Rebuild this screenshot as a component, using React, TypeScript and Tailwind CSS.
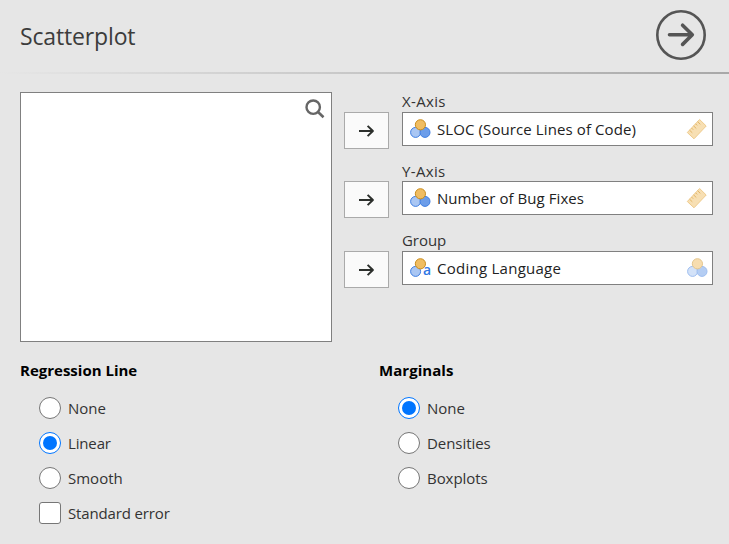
import type { ReactNode } from "react";

function Arrow() {
  return (
    <svg width="16" height="14" viewBox="0 0 16 14" fill="none" stroke="#2c2f2c" strokeWidth="2">
      <path d="M0 7H14" />
      <path d="M8.6 1.9L13.9 7L8.6 12.1" strokeLinejoin="round" />
    </svg>
  );
}

function Nominal({ text = false, faded = false }: { text?: boolean; faded?: boolean }) {
  return (
    <span className={`flex h-5 w-[21px] ${faded ? "opacity-50" : ""}`}>
      <svg width="21" height="20" viewBox="0 0 21 20" className="shrink-0">
        <circle cx="5.6" cy="13.4" r="5" fill="#a9c6f3" stroke="#3e7ee2" />
        {!text && <circle cx="15" cy="13.4" r="5" fill="#6c9de9" stroke="#3e7ee2" />}
        <circle cx="10.4" cy="5.8" r="5.1" fill="#f0bd62" stroke="#c98d1d" />
      </svg>
      {text && (
        <span className="-ml-[8px] pt-[3px] text-[14px] leading-[18px] font-semibold text-[#2f78e4]">a</span>
      )}
    </span>
  );
}

function Ruler() {
  return (
    <svg width="22" height="22" viewBox="0 0 22 22">
      <path d="M1.3 14.5L13.6 1.5L20.2 8L8 20.8Z" fill="#f7dfb3" stroke="#efcb8c" />
      <path d="M3.6 12.2L6.3 14.8M5.6 10.1L7.2 11.7M7.6 7.9L10.3 10.5M9.6 5.8L11.2 7.4M11.6 3.7L14.3 6.3" stroke="#e2b566" fill="none" />
    </svg>
  );
}

function Target({ label, value, tracking, icon, allowed, height, lineHeight = "leading-[19px]" }: {
  label: string; value: string; tracking: string; icon: ReactNode; allowed: ReactNode; height: string; lineHeight?: string;
}) {
  return (
    <div className={`flex gap-[13px] ${height}`}>
      <button className="mt-5 flex h-[37px] w-[45px] items-center justify-center border border-[#aaa] bg-[#fafafa]">
        <Arrow />
      </button>
      <div className="w-[311px]">
        <div className={`h-5 text-[15px] text-[#333] ${label === "Group" ? "tracking-[-0.05px]" : "tracking-[0.35px]"} ${lineHeight}`}>{label}</div>
        <div className="flex h-[34px] items-center border border-[#808080] bg-white pr-[4px] pl-[7px]">
          {icon}
          <span className={`ml-[6px] flex-1 whitespace-nowrap text-[15px] leading-5 text-[#222] ${tracking}`}>{value}</span>
          {allowed}
        </div>
      </div>
    </div>
  );
}

function Option({ label, checked = false, square = false, tracking = "" }: {
  label: string; checked?: boolean; square?: boolean; tracking?: string;
}) {
  return (
    <label className="flex h-[35px] items-center gap-[7px] pl-[19px]">
      <span className={`flex size-[22px] items-center justify-center border bg-white ${square ? "rounded-[3px]" : "rounded-full"} ${checked ? "border-[#0075ff]" : "border-[#767676]"}`}>
        {checked && <span className="size-[14px] rounded-full bg-[#0075ff]" />}
      </span>
      <span className={`text-[15px] leading-5 text-[#333] ${tracking}`}>{label}</span>
    </label>
  );
}

export default function App() {
  return (
    <div className="h-[544px] w-[729px] overflow-hidden bg-[#e6e6e6] font-['Open_Sans','Noto_Sans',sans-serif]">
      <header className="flex h-[72px] items-start justify-between pr-[23px] pl-5">
        <h1 className="mt-[20px] text-[23px] leading-[32px] tracking-[-0.15px] text-[#3c3c3c]">Scatterplot</h1>
        <svg className="mt-[10px]" width="50" height="50" viewBox="0 0 50 50" fill="none" stroke="#555" strokeLinecap="round" strokeLinejoin="round">
          <circle cx="25" cy="25" r="23.7" strokeWidth="2.6" />
          <path d="M13.5 24.8H36M26.6 15.2L36.3 24.8L26.6 34.4" strokeWidth="3.6" />
        </svg>
      </header>
      <div className="h-[2px] bg-linear-to-r from-[#e6e6e6] to-[#a8a8a8]" />
      <main className="pt-[18px]">
        <section className="flex h-[250px] gap-3 pl-5">
          <div className="flex w-[312px] justify-end border border-[#808080] bg-white pt-[6px] pr-[6px]">
            <svg width="20" height="20" viewBox="0 0 20 20" fill="none" stroke="#666" strokeWidth="2.4">
              <circle cx="8.2" cy="8.2" r="6.7" />
              <path d="M12.8 12.8L18.5 18.3" strokeWidth="2.6" />
            </svg>
          </div>
          <div>
            <Target label="X-Axis" value="SLOC (Source Lines of Code)" tracking="tracking-[0.1px]" icon={<Nominal />} allowed={<Ruler />} height="h-[69px]" />
            <Target label="Y-Axis" value="Number of Bug Fixes" tracking="tracking-[0.06px]" icon={<Nominal />} allowed={<Ruler />} height="h-[70px]" lineHeight="leading-[21px]" />
            <Target label="Group" value="Coding Language" tracking="tracking-[0.26px]" icon={<Nominal text />} allowed={<Nominal faded />} height="h-[70px]" />
          </div>
        </section>
        <section className="flex pt-[18px] pl-5">
          <div className="w-[359px]">
            <h2 className="mb-[10px] text-[15px] leading-5 font-bold text-black">Regression Line</h2>
            <Option label="None" />
            <Option label="Linear" checked tracking="tracking-[-0.15px]" />
            <Option label="Smooth" />
            <Option label="Standard error" square tracking="tracking-[-0.14px]" />
          </div>
          <div>
            <h2 className="mb-[10px] text-[15px] leading-5 font-bold tracking-[0.05px] text-black">Marginals</h2>
            <Option label="None" checked />
            <Option label="Densities" tracking="tracking-[-0.05px]" />
            <Option label="Boxplots" tracking="tracking-[-0.05px]" />
          </div>
        </section>
      </main>
    </div>
  );
}
